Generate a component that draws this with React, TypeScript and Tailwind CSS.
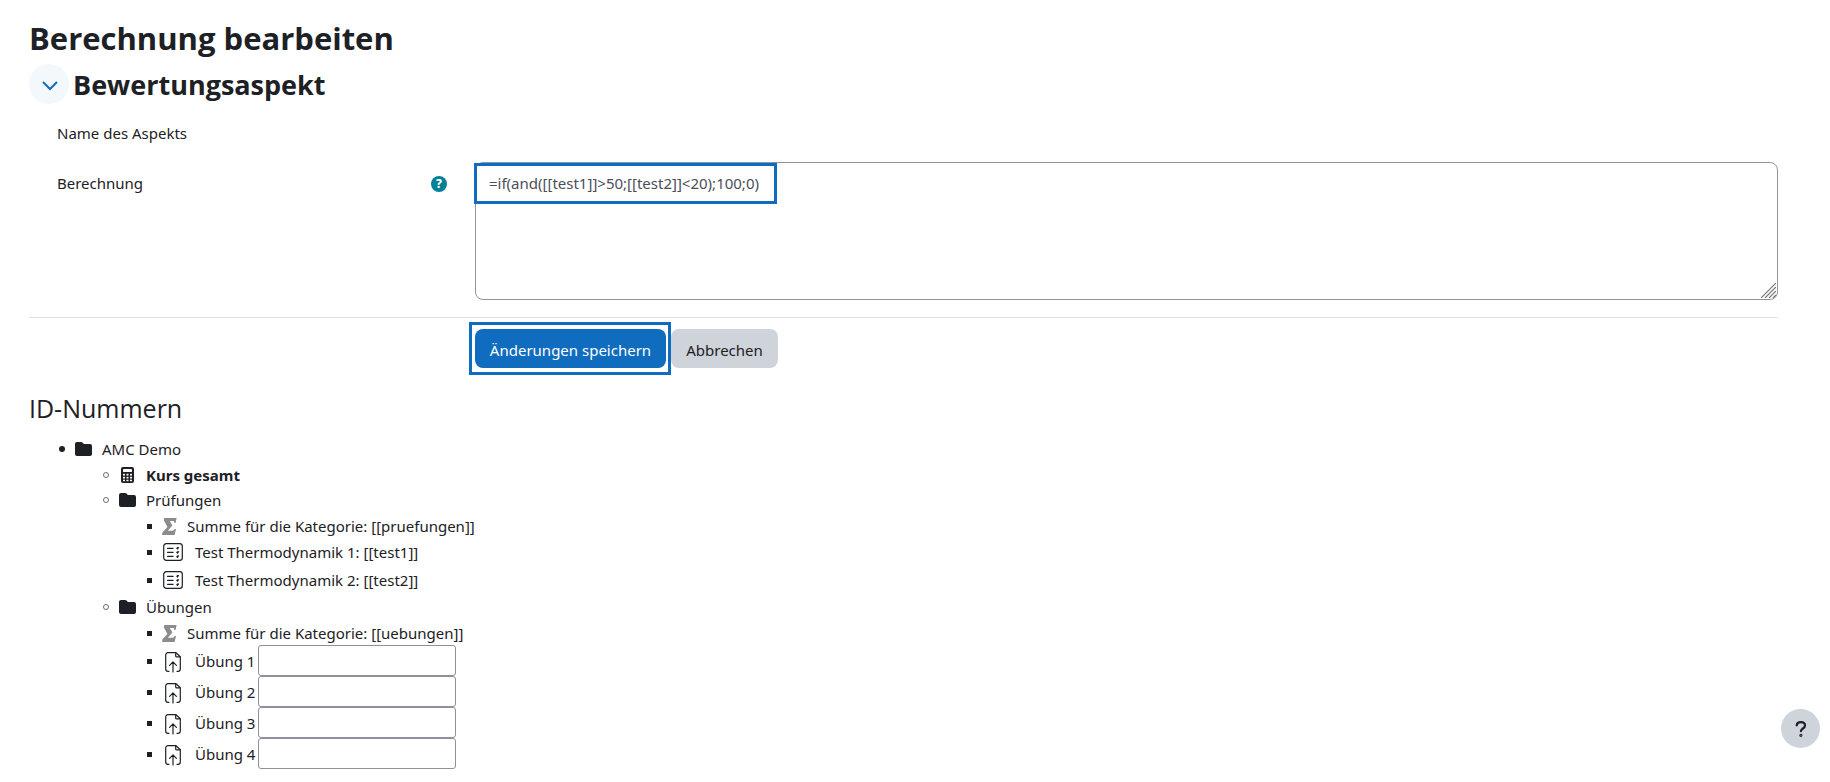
import React, { useState } from "react";
import clsx from "clsx";

type Kind = "folder" | "calc" | "sum" | "quiz" | "upload";
type Marker = "disc" | "circle" | "square";

interface Node {
  label: string;
  kind: Kind;
  bold?: boolean;
  input?: boolean;
  children?: Node[];
}

const tree: Node[] = [
  {
    label: "AMC Demo",
    kind: "folder",
    children: [
      { label: "Kurs gesamt", kind: "calc", bold: true },
      {
        label: "Prüfungen",
        kind: "folder",
        children: [
          { label: "Summe für die Kategorie: [[pruefungen]]", kind: "sum" },
          { label: "Test Thermodynamik 1: [[test1]]", kind: "quiz" },
          { label: "Test Thermodynamik 2: [[test2]]", kind: "quiz" },
        ],
      },
      {
        label: "Übungen",
        kind: "folder",
        children: [
          { label: "Summe für die Kategorie: [[uebungen]]", kind: "sum" },
          { label: "Übung 1", kind: "upload", input: true },
          { label: "Übung 2", kind: "upload", input: true },
          { label: "Übung 3", kind: "upload", input: true },
          { label: "Übung 4", kind: "upload", input: true },
        ],
      },
    ],
  },
];

const markers: Marker[] = ["disc", "circle", "square"];

const rowHeights: Record<Kind, string> = {
  folder: "h-[26px]",
  calc: "h-[25px]",
  sum: "h-[25px]",
  quiz: "h-[28px]",
  upload: "min-h-[31px]",
};

function FolderIcon() {
  return (
    <svg viewBox="0 0 17 14" className="h-[14px] w-[17px]" fill="#1d2125" aria-hidden="true">
      <path d="M2 0h4.2c.5 0 1 .2 1.3.6l.8.9c.3.3.6.4 1 .4H15a2 2 0 0 1 2 2V12a2 2 0 0 1-2 2H2a2 2 0 0 1-2-2V2a2 2 0 0 1 2-2z" />
    </svg>
  );
}

function CalcIcon() {
  return (
    <svg viewBox="0 0 13 16" className="ml-0.5 h-4 w-[13px]" aria-hidden="true">
      <rect width="13" height="16" rx="2" fill="#1d2125" />
      <g fill="#fff">
        <rect x="2" y="2" width="9" height="3" rx=".4" />
        <rect x="2" y="6.8" width="2" height="1.7" />
        <rect x="5.5" y="6.8" width="2" height="1.7" />
        <rect x="9" y="6.8" width="2" height="1.7" />
        <rect x="2" y="9.8" width="2" height="1.7" />
        <rect x="5.5" y="9.8" width="2" height="1.7" />
        <rect x="9" y="9.8" width="2" height="1.7" />
        <rect x="2" y="12.7" width="2" height="1.5" />
        <rect x="5.5" y="12.7" width="2" height="1.5" />
        <rect x="9" y="12.7" width="2" height="1.5" />
      </g>
    </svg>
  );
}

function SumIcon() {
  return (
    <svg viewBox="0 0 15 17" className="mt-px h-[17px] w-[15px]" fill="#8c8c8c" aria-hidden="true">
      <path d="M2.2 0H14.6L13.6 4.9H12.4C12.4 3.4 11.8 3 10.2 3H7.8L10.4 7.6L5.8 12.8H9C10.9 12.8 11.8 12.3 12.6 10.9H14L12.6 17H0L.5 14.2L5.4 8.9L1.8 2.2z" />
    </svg>
  );
}

function QuizIcon() {
  return (
    <svg viewBox="0 0 20 18" className="ml-px h-[18px] w-5" fill="none" stroke="#1d2125" aria-hidden="true">
      <rect x=".7" y=".7" width="18.6" height="16.6" rx="2.6" strokeWidth="1.2" />
      <path d="M4.5 5.3h5.6M4.5 9.3h5.6M4.5 13.3h5.6" strokeWidth="1.2" strokeLinecap="round" />
      <path d="M13.6 4.7l.9.9 1.1-1.5M13.6 8.9l.9.9 1.1-1.5M13.6 13.1l.9.9 1.1-1.5" strokeWidth="1.5" />
    </svg>
  );
}

function UploadIcon() {
  return (
    <svg
      viewBox="0 0 16 21"
      className="mt-1 ml-[3px] h-[21px] w-4"
      fill="none"
      stroke="#1d2125"
      strokeWidth="1.2"
      strokeLinecap="round"
      strokeLinejoin="round"
      aria-hidden="true"
    >
      <path d="M4 19.3H3A2.3 2.3 0 0 1 .7 17V3A2.3 2.3 0 0 1 3 .7h8l4.3 4V17a2.3 2.3 0 0 1-2.3 2.3h-1" />
      <path d="M10.7 .9v3a1 1 0 0 0 1 1h3.4" />
      <path d="M8 20V10M4.6 13.3L8 9.9l3.4 3.4" />
    </svg>
  );
}

function NodeIcon({ kind }: { kind: Kind }) {
  return (
    <span
      className={clsx(
        "flex shrink-0 items-center",
        (kind === "folder" || kind === "calc") && "w-[27px]",
        kind === "sum" && "w-[25px]",
        (kind === "quiz" || kind === "upload") && "w-[33px]",
      )}
    >
      {kind === "folder" && <FolderIcon />}
      {kind === "calc" && <CalcIcon />}
      {kind === "sum" && <SumIcon />}
      {kind === "quiz" && <QuizIcon />}
      {kind === "upload" && <UploadIcon />}
    </span>
  );
}

function Bullet({ type }: { type: Marker }) {
  return (
    <span className={clsx("flex shrink-0 items-center", type === "square" ? "w-[15px] pt-px" : "w-4")}>
      <span
        className={clsx(
          type === "disc" && "size-[6px] rounded-full bg-[#1d2125]",
          type === "circle" && "size-[6px] rounded-full border border-[#6a6f75]",
          type === "square" && "size-[5px] bg-[#1d2125]",
        )}
      />
    </span>
  );
}

function TreeList({ nodes, level }: { nodes: Node[]; level: number }) {
  return (
    <ul className={clsx(level === 0 ? "pl-[30px]" : "pl-11")}>
      {nodes.map((node) => {
        const id = node.label.replace(/\s/g, "-").toLowerCase();
        return (
          <li key={node.label}>
            <div className={clsx("flex items-center", rowHeights[node.kind])}>
              <Bullet type={markers[level]} />
              <NodeIcon kind={node.kind} />
              {node.input ? (
                <>
                  <label htmlFor={id} className="w-[63px] pt-px whitespace-nowrap">
                    {node.label}
                  </label>
                  <input id={id} type="text" className="h-[31px] w-[198px] rounded-[3px] border border-[#8f8f9d] bg-white px-1" />
                </>
              ) : (
                <span className={clsx(node.bold && "font-bold")}>{node.label}</span>
              )}
            </div>
            {node.children && <TreeList nodes={node.children} level={level + 1} />}
          </li>
        );
      })}
    </ul>
  );
}

export default function App() {
  const [formula, setFormula] = useState("=if(and([[test1]]>50;[[test2]]<20);100;0)");

  return (
    <div className="min-h-screen bg-white font-['Noto_Sans','Open_Sans',sans-serif] text-[15px] leading-[22px] text-[#1d2125]">
      <main className="pt-[18px] pr-[52px] pb-3 pl-[29px]">
        <h1 className="font-['Open_Sans','Noto_Sans',sans-serif] text-[31px] leading-[40px] font-bold">Berechnung bearbeiten</h1>

        <form onSubmit={(e) => e.preventDefault()}>
          <div className="mt-1.5 flex items-center gap-1">
            <button
              type="button"
              aria-label="Bewertungsaspekt einklappen"
              className="flex size-10 items-center justify-center rounded-full bg-[#f3f8fc]"
            >
              <svg viewBox="0 0 16 10" className="mt-1 ml-0.5 h-[10px] w-4" fill="none" stroke="#0f6cbf" strokeWidth="2" aria-hidden="true">
                <path d="M1 1l7 7 7-7" />
              </svg>
            </button>
            <h2 className="pt-0.5 font-['Open_Sans','Noto_Sans',sans-serif] text-[27px] leading-[38px] font-bold">Bewertungsaspekt</h2>
          </div>

          <div className="mt-[18px] pl-7">
            <p>Name des Aspekts</p>
          </div>

          <div className="mt-[18px] flex">
            <div className="flex w-[446px] shrink-0 items-start justify-between pt-[10px] pr-[28px] pl-7">
              <label htmlFor="calculation">Berechnung</label>
              <button
                type="button"
                aria-label="Hilfe zu Berechnung"
                className="mt-1 flex size-4 items-center justify-center rounded-full bg-[#008196] text-[12px] leading-none font-extrabold text-white"
              >
                ?
              </button>
            </div>
            <div className="relative flex flex-1">
              <textarea
                id="calculation"
                value={formula}
                onChange={(e) => setFormula(e.target.value)}
                className="h-[138px] w-full resize-none rounded-lg border border-[#8f959e] px-[13px] py-[9px] text-[#495057] outline-none"
              />
              <span className="pointer-events-none absolute top-px -left-px h-[41px] w-[303px] border-[3px] border-[#0f6cbf]" />
              <svg viewBox="0 0 15 15" className="pointer-events-none absolute right-0.5 bottom-0.5 size-[15px]" stroke="#777" strokeWidth="1.2" aria-hidden="true">
                <path d="M0 15L15 0M4 15L15 4M8 15l7-7M12 15l3-3" />
              </svg>
            </div>
          </div>

          <hr className="mt-[17px] border-[#dee2e6]" />

          <div className="mt-[11px] flex gap-[5px] pl-[446px]">
            <div className="relative">
              <button type="submit" className="h-[39px] w-[191px] rounded-lg bg-[#0f6cbf] pt-0.5 whitespace-nowrap text-white">
                Änderungen speichern
              </button>
              <span className="pointer-events-none absolute -top-[7px] -right-[5px] -bottom-[7px] -left-[6px] border-[3px] border-[#0f6cbf]" />
            </div>
            <button type="button" className="h-[39px] w-[107px] rounded-lg bg-[#ced4da] pt-0.5">
              Abbrechen
            </button>
          </div>
        </form>

        <h3 className="mt-6 mb-3 font-['Open_Sans','Noto_Sans',sans-serif] text-[25px] leading-[32px]">ID-Nummern</h3>
        <TreeList nodes={tree} level={0} />
      </main>

      <button
        type="button"
        aria-label="Hilfe"
        className="fixed right-2.5 bottom-[34px] flex size-[39px] items-center justify-center rounded-full bg-[#ced4da]"
      >
        <svg viewBox="0 0 12 16" className="h-4 w-3" fill="none" stroke="#1d2125" strokeWidth="2.2" strokeLinecap="round" aria-hidden="true">
          <path d="M1.7 4.4C1.9 2.4 3.6 1.2 5.8 1.2c2.4 0 4.2 1.4 4.2 3.4 0 3-3.9 2.8-4.1 5.6" />
          <circle cx="5.9" cy="14.3" r=".5" fill="#1d2125" />
        </svg>
      </button>
    </div>
  );
}
